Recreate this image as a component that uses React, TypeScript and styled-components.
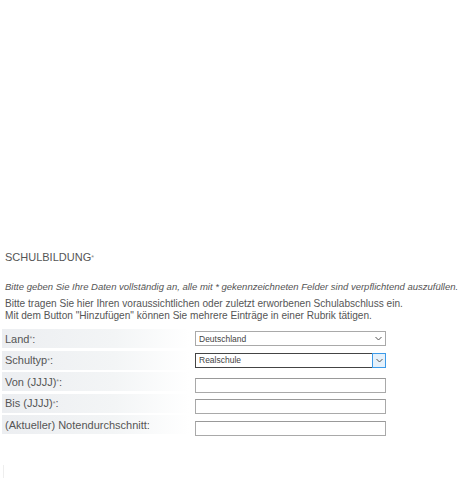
import * as React from 'react';
import styled, { createGlobalStyle } from 'styled-components';

const GlobalStyle = createGlobalStyle`
  html, body {
    margin: 0;
    padding: 0;
    background: #fff;
  }
  body {
    font-family: "Liberation Sans", Arial, sans-serif;
    color: #555;
  }
`;

const Page = styled.div`
  width: 465px;
  height: 480px;
  padding: 250px 0 0 5px;
  box-sizing: border-box;
  position: relative;
`;

const Heading = styled.h2`
  margin: 0 0 16px;
  font-size: 11px;
  font-weight: normal;
  color: #555;
  text-transform: uppercase;
  line-height: 14px;
`;

const Star = styled.span`
  font-size: 7px;
  vertical-align: 1px;
  color: #888;
`;

const Hint = styled.p`
  margin: 0 0 5px;
  font-size: 9.5px;
  font-style: italic;
  color: #555;
  line-height: 12px;
  white-space: nowrap;
`;

const Intro = styled.p`
  margin: 0 0 7px;
  font-size: 10.1px;
  color: #555;
  line-height: 12px;
  white-space: nowrap;
`;

const Form = styled.div`
  display: flex;
  flex-direction: column;
  gap: 2.5px;
  margin-left: -3px;
`;

const Row = styled.div`
  display: flex;
  align-items: center;
  height: 19px;
`;

const Label = styled.label`
  width: 187px;
  height: 100%;
  display: flex;
  align-items: center;
  padding-left: 3px;
  box-sizing: border-box;
  font-size: 11px;
  color: #555;
  background: linear-gradient(to right, #eceef1 0%, #f3f5f6 60%, #fff 100%);
`;

const FieldWrap = styled.div`
  margin-left: 6px;
  width: 191px;
  height: 15px;
  position: relative;
`;

const TextBox = styled.input`
  width: 100%;
  height: 100%;
  box-sizing: border-box;
  border: 1px solid #a9a9a9;
  border-top-color: #999;
  background: #fff;
  margin: 0;
  padding: 0 3px;
  font-family: "Liberation Sans", Arial, sans-serif;
  font-size: 8.5px;
  color: #444;
  outline: none;
`;

const SelectBox = styled.div<{ active?: boolean }>`
  width: 100%;
  height: 100%;
  box-sizing: border-box;
  border: 1px solid ${p => (p.active ? '#444' : '#a9a9a9')};
  background: #fff;
  display: flex;
  align-items: center;
  padding-left: 3px;
  font-size: 8.5px;
  color: #444;
`;

const Value = styled.span`
  flex: 1;
`;

const Arrow = styled.span<{ active?: boolean }>`
  width: 14px;
  height: ${p => (p.active ? '15px' : '13px')};
  box-sizing: border-box;
  display: flex;
  align-items: center;
  justify-content: center;
  margin-right: ${p => (p.active ? '-1px' : '0')};
  border: ${p => (p.active ? '1px solid #3c9ae8' : 'none')};
  background: ${p => (p.active ? '#e5f1fb' : 'transparent')};
`;

const Chevron: React.FC = () => (
  <svg width="7" height="5" viewBox="0 0 7 5">
    <path d="M0.5 1 L3.5 4 L6.5 1" fill="none" stroke="#555" strokeWidth="1" />
  </svg>
);

const EdgeLine = styled.div`
  position: absolute;
  left: 3px;
  top: 465px;
  width: 1px;
  height: 13px;
  background: #eee;
`;

interface Field {
  label: string;
  required?: boolean;
  select?: string;
  active?: boolean;
}

const fields: Field[] = [
  { label: 'Land', required: true, select: 'Deutschland' },
  { label: 'Schultyp', required: true, select: 'Realschule', active: true },
  { label: 'Von (JJJJ)', required: true },
  { label: 'Bis (JJJJ)', required: true },
  { label: '(Aktueller) Notendurchschnitt' },
];

const App: React.FC = () => (
  <Page>
    <GlobalStyle />
    <Heading>
      Schulbildung<Star>*</Star>
    </Heading>
    <Hint>
      Bitte geben Sie Ihre Daten vollständig an, alle mit * gekennzeichneten Felder sind verpflichtend auszufüllen.
    </Hint>
    <Intro>
      Bitte tragen Sie hier Ihren voraussichtlichen oder zuletzt erworbenen Schulabschluss ein.
      <br />
      Mit dem Button "Hinzufügen" können Sie mehrere Einträge in einer Rubrik tätigen.
    </Intro>
    <Form>
      {fields.map(f => (
        <Row key={f.label}>
          <Label>
            {f.label}
            {f.required && <Star>*</Star>}:
          </Label>
          <FieldWrap>
            {f.select ? (
              <SelectBox active={f.active}>
                <Value>{f.select}</Value>
                <Arrow active={f.active}>
                  <Chevron />
                </Arrow>
              </SelectBox>
            ) : (
              <TextBox type="text" />
            )}
          </FieldWrap>
        </Row>
      ))}
    </Form>
    <EdgeLine />
  </Page>
);

export default App;
